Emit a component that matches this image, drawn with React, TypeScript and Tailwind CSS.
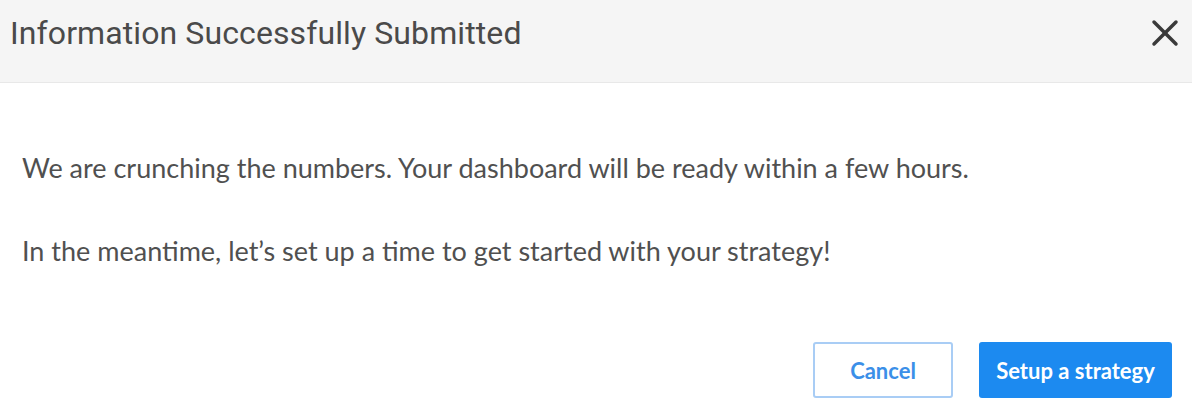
import { X } from "lucide-react";

export default function App() {
  return (
    <div className="w-[1192px] h-[410px] bg-white flex flex-col overflow-hidden">
      <header className="h-[83px] flex items-start justify-between pl-[10px] pr-[5px] bg-[#f5f5f5] border-b border-[#e8e8e8]">
        <h1 className="mt-[13px] text-[32px] leading-[40px] text-[#4a4a4a] font-['Roboto',sans-serif] tracking-[0.1px]">
          Information Successfully Submitted
        </h1>
        <X className="mt-[11px] w-[44px] h-[44px] text-[#3a3a3a]" strokeWidth={1.9} />
      </header>

      <div className="flex-1 flex flex-col pl-[22px] pr-[20px] font-['Lato',sans-serif] text-[27px] text-[#505050]">
        <p className="mt-[67px] leading-[36px]">
          We are crunching the numbers. Your dashboard will be ready within a few hours.
        </p>
        <p className="mt-[47px] leading-[36px]">
          In the meantime, let’s set up a time to get started with your strategy!
        </p>
        <div className="mt-[73px] flex justify-end gap-[26px]">
          <button className="w-[140px] h-[56px] rounded-[3px] border-2 border-[#a9cdf5] text-[#3b8fe8] font-bold text-[22px]">
            Cancel
          </button>
          <button className="w-[193px] h-[56px] rounded-[3px] bg-[#1c8af0] text-white font-bold text-[22px]">
            Setup a strategy
          </button>
        </div>
      </div>
    </div>
  );
}
